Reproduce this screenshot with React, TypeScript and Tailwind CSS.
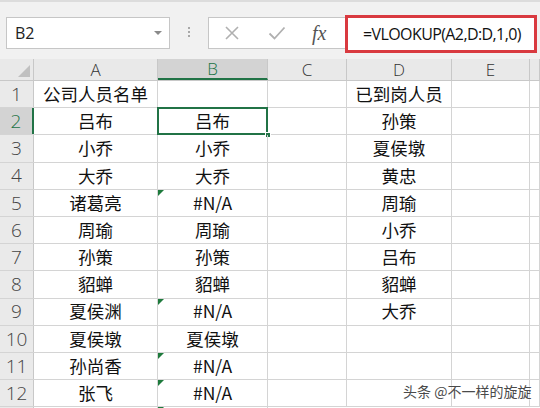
import React from 'react'

const cols = [
  { key: 'A', w: 'w-[124px]' },
  { key: 'B', w: 'w-[110px]' },
  { key: 'C', w: 'w-[79px]' },
  { key: 'D', w: 'w-[105px]' },
  { key: 'E', w: 'w-[78px]' },
  { key: 'F', w: 'flex-1' },
]

// [A, B, D] per row
const rows: [string, string, string][] = [
  ['公司人员名单', '', '已到岗人员'],
  ['吕布', '吕布', '孙策'],
  ['小乔', '小乔', '夏侯墩'],
  ['大乔', '大乔', '黄忠'],
  ['诸葛亮', '#N/A', '周瑜'],
  ['周瑜', '周瑜', '小乔'],
  ['孙策', '孙策', '吕布'],
  ['貂蝉', '貂蝉', '貂蝉'],
  ['夏侯渊', '#N/A', '大乔'],
  ['夏侯墩', '夏侯墩', ''],
  ['孙尚香', '#N/A', ''],
  ['张飞', '#N/A', ''],
]

const font = { fontFamily: '"Noto Sans CJK SC", "Noto Sans", sans-serif' }

function Cell({ w, text, err, selected }: { w: string; text: string; err?: boolean; selected?: boolean }) {
  return (
    <div className={`${w} relative shrink-0 h-full border-r border-[#d4d4d4] flex items-center justify-center text-[17.5px] text-[#111]`}>
      {err && (
        <div className="absolute top-0 left-0 w-0 h-0 border-t-[6px] border-t-[#1e7a3c] border-r-[6px] border-r-transparent" />
      )}
      {selected && (
        <>
          <div className="absolute -top-px -left-px -right-px -bottom-px border-2 border-[#217346]" />
          <div className="absolute -right-[4px] -bottom-[4px] w-[6px] h-[6px] bg-[#217346] border border-white" />
        </>
      )}
      <span className="relative">{text}</span>
    </div>
  )
}

export default function App() {
  return (
    <div className="w-[540px] h-[408px] overflow-hidden bg-white relative" style={font}>
      {/* Formula bar */}
      <div className="h-[59px] bg-[#f1f1f1] border-t-2 border-[#dcdcdc] flex items-start pt-[13px]">
        <div className="ml-[6px] mt-[2px] w-[164px] shrink-0 h-[32px] bg-white border border-[#c6c6c6] flex items-center justify-between pl-[8px] pr-[7px]">
          <span className="text-[16px] text-[#222]" style={{ fontFamily: '"Open Sans", sans-serif' }}>B2</span>
          <div className="w-0 h-0 border-l-[4px] border-l-transparent border-r-[4px] border-r-transparent border-t-[4px] border-t-[#8a8a8a]" />
        </div>
        <div className="w-[38px] shrink-0 h-[34px] flex flex-col items-center justify-center gap-[2px]">
          <div className="w-[2px] h-[2px] bg-[#a8a8a8]" />
          <div className="w-[2px] h-[2px] bg-[#a8a8a8]" />
          <div className="w-[2px] h-[2px] bg-[#a8a8a8]" />
        </div>
        <div className="mt-[2px] h-[32px] w-[137px] shrink-0 bg-white border border-[#c6c6c6] border-r-0 flex items-center">
          <svg width="16" height="16" viewBox="0 0 16 16" className="ml-[15px]">
            <path d="M2 2 L14 14 M14 2 L2 14" stroke="#b0b0b0" strokeWidth="1.6" fill="none" />
          </svg>
          <svg width="18" height="16" viewBox="0 0 18 16" className="ml-[28px]">
            <path d="M1.5 8.5 L6.5 13.5 L16.5 2.5" stroke="#b0b0b0" strokeWidth="1.8" fill="none" />
          </svg>
          <span className="ml-[26px] text-[20px] italic text-[#555] leading-none" style={{ fontFamily: '"Liberation Serif", serif' }}>
            fx
          </span>
        </div>
        <div className="w-[192px] shrink-0 h-[38px] bg-white border-[3px] border-[#d93a40] flex items-center pl-[15px] overflow-hidden">
          <span className="text-[16px] text-[#111] whitespace-nowrap tracking-[-0.6px]" style={{ fontFamily: '"Open Sans", sans-serif' }}>
            =VLOOKUP(A2,D:D,1,0)
          </span>
        </div>
      </div>

      {/* Column headers */}
      <div className="flex h-[22px] bg-[#e9e9e9] border-b border-[#c8c8c8]">
        <div className="w-[34px] shrink-0 h-full border-r border-[#c8c8c8] relative">
          <div className="absolute right-[3px] bottom-[3px] w-0 h-0 border-l-[12px] border-l-transparent border-b-[12px] border-b-[#c0c0c0]" />
        </div>
        {cols.map(c => (
          <div
            key={c.key}
            className={`${c.w} shrink-0 h-full border-r border-[#c8c8c8] flex items-center justify-center text-[17px] ${
              c.key === 'B' ? 'bg-[#d3d3d3] text-[#217346] border-b-2 border-b-[#217346]' : 'text-[#333]'
            }`}
            style={{ fontFamily: '"Open Sans", sans-serif', fontWeight: 300 }}
          >
            {c.key === 'F' ? '' : c.key}
          </div>
        ))}
      </div>

      {/* Grid rows */}
      {rows.map((r, i) => (
        <div key={i} className="flex h-[27.2px] border-b border-[#d4d4d4]">
          <div
            className={`w-[34px] shrink-0 h-full flex items-center justify-center text-[19px] ${
              i === 1 ? 'bg-[#d3d3d3] text-[#217346] border-r-2 border-[#217346]' : 'bg-[#eaeaea] text-[#444] border-r border-[#c8c8c8]'
            }`}
            style={{ fontFamily: '"Open Sans", sans-serif', fontWeight: 300 }}
          >
            {i + 1}
          </div>
          <Cell w="w-[124px]" text={r[0]} />
          <Cell w="w-[110px]" text={r[1]} err={r[1] === '#N/A'} selected={i === 1} />
          <Cell w="w-[79px]" text="" />
          <Cell w="w-[105px]" text={r[2]} />
          <Cell w="w-[78px]" text="" />
          <Cell w="flex-1" text="" />
        </div>
      ))}
      <div className="flex h-[10px]">
        <div className="w-[34px] shrink-0 bg-[#eaeaea] border-r border-[#c8c8c8]" />
        <div className="w-[124px] shrink-0 border-r border-[#d4d4d4]" />
        <div className="w-[110px] shrink-0 border-r border-[#d4d4d4] relative">
          <div className="absolute top-0 left-0 w-0 h-0 border-t-[6px] border-t-[#1e7a3c] border-r-[6px] border-r-transparent" />
        </div>
      </div>

      {/* Watermark */}
      <div
        className="absolute left-[403px] top-[381px] text-[14px] text-[#4a4a4a]"
        style={{ textShadow: '0 0 2px #fff, 0 0 2px #fff' }}
      >
        头条 @不一样的旋旋
      </div>
    </div>
  )
}
